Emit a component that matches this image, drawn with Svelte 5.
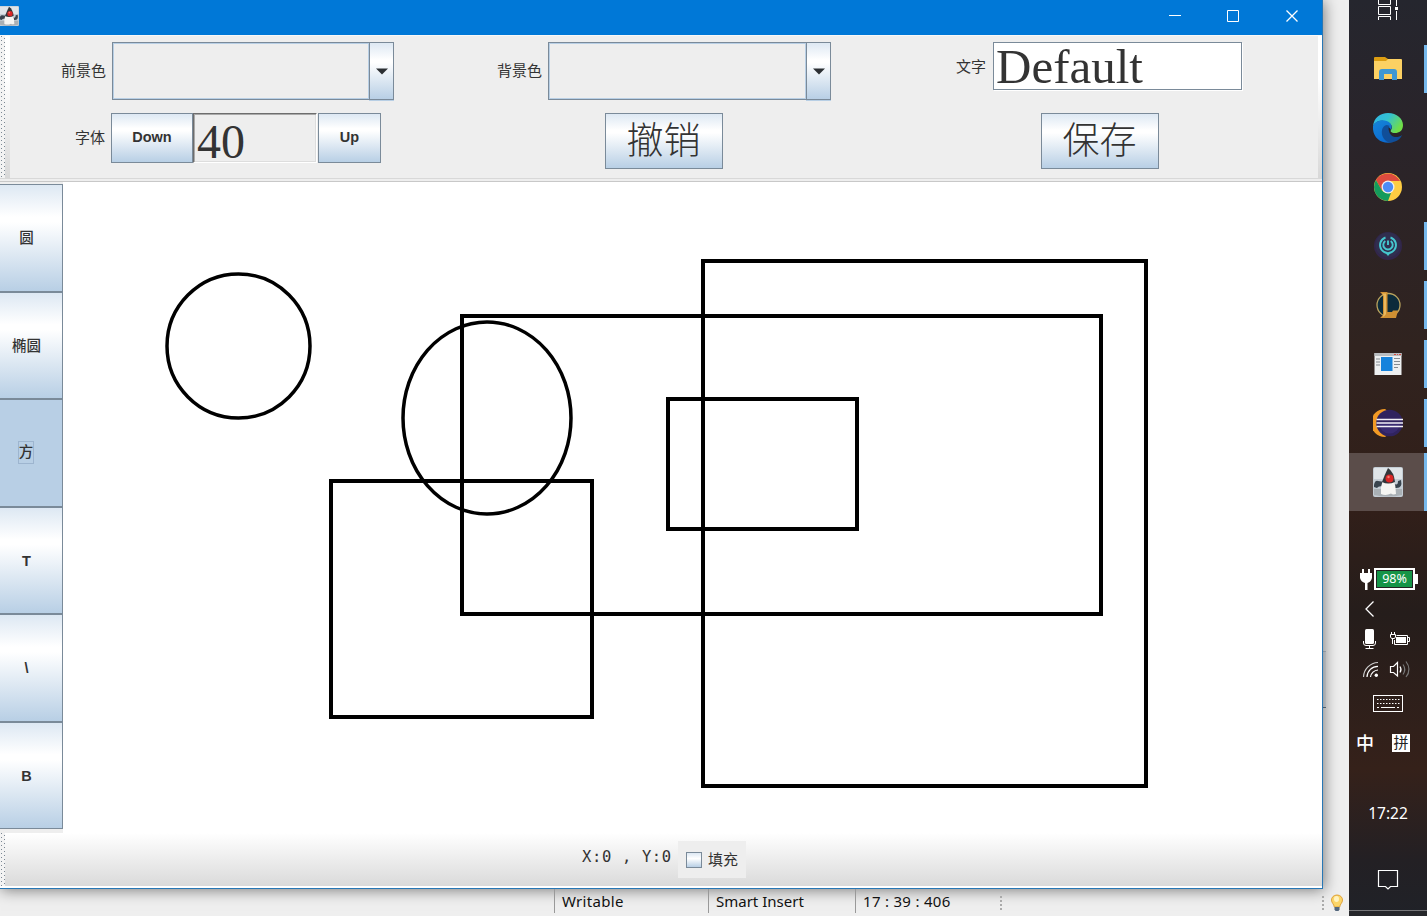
<script>
  const tools = ['圆', '椭圆', '方', 'T', '\\', 'B'];
  const selected = 2;
  const rects = [
    [703, 261, 443, 525],
    [462, 316, 639, 298],
    [668, 399, 189, 130],
    [331, 481, 261, 236]
  ];
  const apps = [
    { id: 'files', open: true },
    { id: 'edge' },
    { id: 'chrome' },
    { id: 'orb', open: true },
    { id: 'league', open: true },
    { id: 'window', open: true },
    { id: 'eclipse', open: true },
    { id: 'duke', open: true, active: true }
  ];
</script>

{#snippet duke()}
  <rect x="0" y="0" width="30" height="30" rx="2" fill="#c3ccd4" />
  <rect x="1" y="1" width="28" height="11" fill="#dfe4e8" />
  <path d="M1 22H29V28Q15 31 1 28Z" fill="#a9b0b5" />
  <path d="M1 18Q2 13 5 14L12 15L11 20Q6 18 4 21L1 20Z" fill="#39444e" />
  <path d="M20 16Q25 20 25 14L28 13Q30 22 22 21Z" fill="#39444e" />
  <path d="M8 20Q10 12 12 10H20Q23 19 23 27Q20 28 18 26.500Q13 29 8 27Z" fill="#f5f5f2" />
  <path d="M15 1Q21 5 22 15Q15 18 9 15Q12 7 15 1Z" fill="#33363a" />
  <circle cx="16.500" cy="11.500" r="4" fill="#d92626" />
  <circle cx="15.500" cy="10" r="1.200" fill="#f47a70" />
{/snippet}

<div class="screen">
  <div class="desk">
    <div class="window">
      <header class="title">
        <svg class="logo" width="20" height="20" viewBox="0 0 30 30">{@render duke()}</svg>
        <svg class="controls" width="160" height="35" viewBox="0 0 160 35" fill="none" stroke="#fff">
          <path d="M6 15.500H18M64.500 10.500H75.500V21.500H64.500Z" /><path d="M123.500 10.500L134.500 21.500M134.500 10.500L123.500 21.500" stroke-width="1.300" />
        </svg>
      </header>

      <section class="toolbar">
        <i class="grip"></i><i class="edge"></i>
        <div class="cell">
          <div class="row first"><span class="label">前景色</span><span class="combo"><i></i><b><svg width="12" height="7" viewBox="0 0 12 7"><path d="M0 .5H12L6 6.500Z" fill="#2b2f33" /></svg></b></span></div>
          <div class="row fontrow"><span class="label">字体</span><button class="metal down">Down</button><span class="size">40</span><button class="metal up">Up</button></div>
        </div>
        <div class="cell">
          <div class="row first"><span class="label">背景色</span><span class="combo wide"><i></i><b><svg width="12" height="7" viewBox="0 0 12 7"><path d="M0 .5H12L6 6.500Z" fill="#2b2f33" /></svg></b></span></div>
          <div class="row big"><button class="metal">撤销</button></div>
        </div>
        <div class="cell">
          <div class="row first text"><span class="label">文字</span><span class="field">Default</span></div>
          <div class="row big"><button class="metal">保存</button></div>
        </div>
        <i class="edge right"></i>
      </section>

      <main>
        <nav>
          {#each tools as tool, i}
            <button class="metal" class:selected={i === selected}><span>{tool}</span></button>
          {/each}
        </nav>
        <svg class="canvas" width="1259" height="651" viewBox="63 182 1259 651" fill="none" stroke="#000" stroke-width="4">
          <ellipse cx="238.500" cy="346" rx="71.500" ry="72" stroke-width="3.500" />
          <ellipse cx="487" cy="418" rx="84" ry="96" stroke-width="3.500" />
          {#each rects as [x, y, w, h]}
            <rect {x} {y} width={w} height={h} />
          {/each}
        </svg>
      </main>

      <footer>
        <i class="grip"></i>
        <span class="coords">X:0 , Y:0</span>
        <span class="check"><i></i>填充</span>
      </footer>
    </div>

    <div class="status">
      <span class="s1">Writable</span><span class="s2">Smart Insert</span><span class="s3">17 : 39 : 406</span>
      <i class="dots"></i><i class="dots far"></i>
      <svg class="bulb" width="14" height="18" viewBox="0 0 14 18">
        <path d="M7 1C3.500 1 1.500 3.500 1.500 6C1.500 9 4 10 4.300 13H9.700C10 10 12.500 9 12.500 6C12.500 3.500 10.500 1 7 1Z" fill="#fbd568" stroke="#dfa23c" />
        <ellipse cx="6.500" cy="5" rx="2.500" ry="3" fill="#fff3c0" />
        <path d="M4.500 13H9.500V15.500L8.500 17H5.500L4.500 15.500Z" fill="#53677d" />
      </svg>
    </div>
    <i class="behind"></i>
  </div>

  <aside>
    <div class="taskview">
      <svg width="24" height="21" viewBox="0 0 24 21" fill="none" stroke="#fff" stroke-width="1">
        <path d="M3.500 0V4.500H15.500V0M3.500 6.500H15.500V14.500H3.500ZM3.500 20V16.500H15.500V20M21.500 0V6M21.500 11V20" />
        <rect x="20" y="7" width="3" height="3" fill="#fff" stroke="none" />
      </svg>
    </div>
    {#each apps as app}
      <div class="app" class:active={app.active} class:open={app.open}>
        <svg width="30" height="30" viewBox="0 0 30 30">
          {#if app.id === 'files'}
            <path d="M1 4Q1 3 2 3H12L15 5V9H1Z" fill="#dc9d12" />
            <path d="M1 7H13L15 5H28Q29 5 29 6V25H1Z" fill="#fcd163" />
            <path d="M6 26V18Q6 15 9 15H21Q24 15 24 18V26H19V20H11V26Z" fill="#3e97d3" />
          {:else if app.id === 'edge'}
            <defs>
              <linearGradient id="sea" x1="0" y1="0" x2="1" y2=".5"><stop stop-color="#2fb5ea" /><stop offset=".5" stop-color="#34c2d0" /><stop offset="1" stop-color="#70de48" /></linearGradient>
              <linearGradient id="deep" x1="0" y1="0" x2=".6" y2="1"><stop stop-color="#1685d8" /><stop offset="1" stop-color="#0b6ad0" /></linearGradient>
            </defs>
            <path d="M0 13C1 5 7 0 15 0C24 0 30 6 30 12C30 18 26 20 22 20C18 20 17 18 18 17C21 13 17 9 11 8C6 7 2 9 0 13Z" fill="url(#sea)" />
            <path d="M0 13C2 7 12 5 17 10C20 13 18 16 18 17C16 12 11 13 10 18C9 24 15 30 20 29C9 32-1 25 0 13Z" fill="url(#deep)" />
            <path d="M14 12C8 13 7 22 12 27C15 31 26 30 29 22C24 26 17 24 16 18C15 15 16 13 17 13Z" fill="#104e99" />
          {:else if app.id === 'chrome'}
            <circle cx="15" cy="15" r="14" fill="#ffcd42" />
            <path d="M2.900 8A14 14 0 0 1 27.100 9H15L9 18.500Z" fill="#dc4b3e" />
            <path d="M2.900 8L9 18.500Q12 22 18 21L15 29A14 14 0 0 1 2.900 8Z" fill="#149b5c" />
            <circle cx="15" cy="15" r="6.500" fill="#f1f1f1" /><circle cx="15" cy="15" r="5.200" fill="#4d8cf5" />
          {:else if app.id === 'orb'}
            <circle cx="15" cy="15" r="14" fill="#32264a" /><circle cx="15" cy="14" r="12.500" fill="#302e4e" />
            <g fill="none" stroke="#45c6ce" stroke-width="1.900"><path d="M12.500 6.500A8 8 0 1 0 17.500 6.500M12.300 10A4.700 4.700 0 1 0 17.700 10M15 9.500V14" /></g>
            <path d="M12.500 22H17.500L15 25Z" fill="#45c6ce" />
          {:else if app.id === 'league'}
            <circle cx="15.500" cy="15" r="11.500" fill="#0b2b3b" stroke="#b9a35e" stroke-width="1.300" />
            <path d="M7 2H14.500V22H19L20 20.500H25L23 28H7L10 25V5Z" fill="#cf9033" />
            <path d="M9 3.500H13V24L11 26.500H9.500L11 24V6Z" fill="#e9b95e" />
          {:else if app.id === 'window'}
            <rect x="1.500" y="4" width="27" height="22" fill="#eef0f1" />
            <path d="M1.500 4H28.500V7H1.500Z" fill="#b8bcc0" /><path d="M21 5H23V6H21M24 5H25V6H24M26 5H28V6H26" fill="#d5493e" />
            <rect x="8" y="8" width="11.500" height="14" fill="#1683dc" />
            <path d="M3 10H7M3 13H7M3 16H7M21 9.500H27M21 12.500H27M21 15.500H27M21 18.500H25" stroke="#858b91" />
          {:else if app.id === 'eclipse'}
            <path d="M12 1A14 14 0 0 0 12 29L16 26V4Z" fill="#f29a24" />
            <circle cx="16.500" cy="15" r="13.300" fill="#30235f" />
            <path d="M6 15H27A10.500 10.500 0 0 1 6 15Z" fill="#40307e" opacity=".6" />
            <path d="M3.500 11.500H30M3.500 15H30M3.500 18.500H30" stroke="#f1f0f6" stroke-width="1.700" />
          {:else}
            {@render duke()}
          {/if}
        </svg>
      </div>
    {/each}

    <div class="tray power">
      <svg width="13" height="23" viewBox="0 0 13 23"><path d="M3 1H5V5H9V1H11V5H13V10Q12 14 8.500 15V22H6V15Q2 14 1 10V5H3Z" fill="#fff" /></svg>
      <span class="battery">98%</span>
    </div>
    <div class="tray">
      <svg width="78" height="30" viewBox="0 0 78 30"><path d="M24.500 7.500L17 15L24.500 22.500" fill="none" stroke="#fff" stroke-width="1.300" /></svg>
    </div>
    <div class="tray">
      <svg width="78" height="30" viewBox="0 0 78 30" fill="none" stroke="#fff">
        <rect x="16" y="5" width="9" height="15" rx="1.500" fill="#fff" stroke="none" />
        <path d="M14.500 17V19Q14.500 21.500 17 21.500H24Q26.500 21.500 26.500 19V17M20.500 21V24M16.500 24.500H24.500" />
        <path d="M47.500 11.500H58.500V20.500H45.500V16M59 13.500H60.500V17.500H59M42.500 8V10M45.500 8V10M41.500 10.500H46.500V13L45.500 14.500H42.500L41.500 13ZM43.500 15V20" />
        <rect x="47" y="13" width="10" height="6" fill="#fff" stroke="none" />
      </svg>
    </div>
    <div class="tray">
      <svg width="78" height="30" viewBox="0 0 78 30" fill="none" stroke="#fff" stroke-width="1.200">
        <path d="M14.500 23A15 15 0 0 1 29 8.500" stroke="#ccc" /><path d="M18 23A11 11 0 0 1 29 12.300M21.500 23A8 8 0 0 1 29 16" />
        <circle cx="27.300" cy="21.300" r="1.700" fill="#fff" stroke="none" />
        <path d="M41.500 12.500H44.500L48.500 8.500V22L44.500 18.500H41.500ZM51 12.500Q53 15.500 51 18.500" />
        <path d="M54 10.500Q57.500 15.500 54 20.500M57 7.500Q63 15.500 57 23" stroke="#777" />
      </svg>
    </div>
    <div class="tray keyboard">
      <svg width="30" height="18" viewBox="0 0 30 18" fill="none" stroke="#fff">
        <rect x=".5" y=".5" width="29" height="16" />
        <path d="M4 4.500H27M4 8.500H27" stroke-dasharray="1.500 1.500" /><path d="M4 12.500H6M8 12.500H22M24 12.500H26" />
      </svg>
    </div>
    <div class="tray ime"><span>中</span><b>拼</b></div>
    <div class="clock">17:22</div>
    <div class="notice">
      <svg width="22" height="22" viewBox="0 0 22 22" fill="none" stroke="#fff" stroke-width="1.200"><path d="M1.500 1.500H20.500V17.500H13.500L11 20L8.500 17.500H1.500Z" /></svg>
    </div>
  </aside>
</div>

<style>
  :global(body) { margin: 0; overflow: hidden; }
  .screen { display: grid; grid-template-columns: 1349px 78px; height: 916px; overflow: hidden; font-family: "Liberation Sans", "Noto Sans CJK SC", sans-serif; color: #333; }
  .desk { position: relative; background: #efefef; overflow: hidden; }
  .window { position: relative; z-index: 1; box-sizing: border-box; width: 1323px; height: 889px; border-right: 1px solid #2877b5; border-bottom: 1px solid #2877b5; background: #fff; box-shadow: 1px 1px 14px rgba(0, 0, 0, .5); }
  .title { display: flex; justify-content: space-between; height: 35px; background: #0078d7; }
  .logo { margin: 6px 0 0 -1px; }
  .controls { margin-right: -1px; }
  button { padding: 0; color: #333; font: bold 14.500px "Liberation Sans", "Noto Sans CJK SC", sans-serif; }
  .metal { box-sizing: border-box; border: 1px solid #7a8a99; border-radius: 0; background: linear-gradient(#dde8f3, #fff 30%, #fff 35%, #b8cfe5); }
  .toolbar { box-sizing: border-box; display: flex; height: 147px; background: #eee; border-top: 1px solid #f8f8f8; border-bottom: 1px solid #c8c8c8; box-shadow: inset 0 -2px #eee, inset 0 -3px #d8d8d8; }
  .grip { width: 5px; background-image: radial-gradient(circle at 1.5px .5px, #7c8894 .6px, transparent .8px), radial-gradient(circle at 4.5px 2.5px, #7c8894 .6px, transparent .8px); background-size: 6px 4px; background-color: #f3f3f3; }
  .toolbar .grip { margin-bottom: 3px; }
  .toolbar .edge { width: 5px; margin-bottom: 3px; background: linear-gradient(#fff 30%, #d8d8d8); }
  .toolbar .right { width: 4px; margin-left: auto; }
  .cell { width: 436.3px; }
  .row { display: flex; }
  .label { font-size: 15px; line-height: 22px; white-space: nowrap; color: #333; }
  .first { height: 70px; padding: 6px 0 0 51px; box-sizing: border-box; }
  .first .label { width: 51px; padding-top: 18px; }
  .text { padding-left: 74px; }
  .text .label { width: 37px; padding-top: 14px; }
  .combo { display: flex; height: 58px; width: 282px; }
  .wide { width: 283px; }
  .combo i { flex: 1; box-sizing: border-box; border: 1px solid #7a8a99; border-right: 0; box-shadow: inset 0 0 0 1px #b8cfe5; }
  .combo b { box-sizing: border-box; width: 25px; border: 1px solid #7a8a99; display: grid; place-items: center; background: linear-gradient(#dde8f3, #fff 30%, #fff 35%, #b8cfe5); box-shadow: 0 1px #b8cfe5; }
  .field { box-sizing: border-box; width: 249px; height: 48px; border: 1px solid #7a8a99; background: #fff; box-shadow: 1px 1px #fff; font: 49px/48px "Liberation Serif", serif; padding-left: 2px; }
  .fontrow { padding: 7px 0 0 65px; }
  .fontrow .label { width: 36px; padding-top: 14px; }
  .down { width: 82px; height: 50px; padding-bottom: 2px; }
  .size { box-sizing: border-box; width: 124px; height: 50px; border: 1px solid; border-color: #6d6d6d #fff #fff #6d6d6d; box-shadow: inset 1px 1px #aaa, inset -1px -1px #ddd; padding-left: 3px; font: 48px/56px "Liberation Serif", serif; }
  .up { width: 63px; height: 50px; margin-left: 1px; padding-bottom: 2px; }
  .big { padding: 7px 0 0 158.500px; }
  .big .metal { width: 118px; height: 56px; font: 300 37px/48px "Noto Sans CJK SC Light", "Noto Sans CJK SC", sans-serif; padding-bottom: 7px; }
  main { display: flex; height: 651px; }
  nav { box-sizing: border-box; width: 63px; height: 651px; padding: 2px 0 4px; background: #eee; display: grid; grid-template-rows: repeat(6, 1fr); }
  nav .metal { border-left: 0; padding: 0 9px 2px 0; }
  nav .selected { background: #b8cfe5; padding: 0 10px 0 0; }
  .selected span { display: inline-block; border: 1px solid #9db5cf; line-height: 21px; padding: 0; }
  nav button { font-weight: 500; font-size: 14.500px; }
  nav button:nth-child(n+4) { font-weight: bold; padding-bottom: 0; padding-top: 1px; }
  .canvas { display: block; }
  footer { display: flex; height: 53px; background: linear-gradient(#fff, #dadada); border-bottom: 2px solid #fff; }
  .coords { margin-left: 577px; padding-top: 13px; width: 96px; font: 15.500px/22px "DejaVu Sans Mono", monospace; letter-spacing: .65px; white-space: pre; }
  .check { box-sizing: border-box; width: 68px; height: 37px; margin-top: 8px; padding-left: 8px; background: #eee; font-size: 15px; line-height: 36px; display: flex; align-items: center; gap: 6px; }
  .check i { width: 14px; height: 14px; border: 1px solid #7a8a99; background: linear-gradient(#dde8f3, #fff 40%, #b8cfe5); }
  .status { display: flex; height: 27px; font: 15px/25px "Noto Sans", sans-serif; color: #111; position: relative; z-index: 2; }
  .status span { box-sizing: border-box; height: 24px; border-left: 1px solid #999; padding-left: 7px; white-space: pre; }
  .s1 { margin-left: 554px; width: 154px; letter-spacing: .3px; }
  .s2 { width: 147px; }
  .s3 { width: 145px; letter-spacing: .3px; }
  .dots { width: 2px; height: 14px; margin-top: 7px; background: repeating-linear-gradient(#aaa 0 2px, transparent 2px 4px); }
  .far { margin-left: 320px; }
  .bulb { margin: 5px 0 0 6px; }
  .behind { position: absolute; left: 1323px; top: 651px; width: 3px; height: 55px; border-top: 1px solid #b8c4d0; border-bottom: 1px solid #65798d; background: #dfe4e9; }
  aside { background: linear-gradient(#25262e, #2a242a 15%, #30231f 38%, #321f19 55%, #251d1b 67%, #35211a 84%, #232024 94%, #202228); color: #fff; box-shadow: inset 0 -5px #26272b, inset 0 -6px #77777a; }
  .taskview { height: 40px; padding-left: 26px; }
  .app { position: relative; box-sizing: border-box; height: 59px; padding-bottom: 2px; display: grid; place-items: center; }
  .app svg { display: block; }
  .open::after { content: ""; position: absolute; right: 0; top: 5px; width: 3px; height: 48px; background: #76b9ed; }
  .active { height: 58px; padding: 0; background: #5b4d4a; }
  .active::after { top: 0; height: 58px; }
  .tray { height: 30px; display: flex; align-items: center; }
  .power { margin-top: 53px; padding-left: 10px; gap: 2px; }
  .battery { position: relative; box-sizing: border-box; width: 41px; height: 22px; border: 2px solid #fff; background: #159447; box-shadow: inset 0 0 0 1px #222; text-align: center; font: 12.500px/18px "Noto Sans", sans-serif; }
  .battery::after { content: ""; position: absolute; left: 39px; top: 4px; width: 3px; height: 10px; background: #fff; }
  .keyboard { height: 40px; justify-content: center; }
  .ime { height: 38px; padding-left: 7px; gap: 18px; font: 500 18px/20px "Noto Sans CJK SC", sans-serif; }
  .ime span { padding-bottom: 2px; }
  .ime b { width: 18px; height: 18px; background: #fff; color: #222; text-align: center; font: 15px/16px "Noto Sans CJK SC", sans-serif; }
  .clock { margin-top: 36px; height: 30px; text-align: center; font: 15.500px/30px "Noto Sans", sans-serif; }
  .notice { margin-top: 41px; padding-left: 28px; }
</style>
